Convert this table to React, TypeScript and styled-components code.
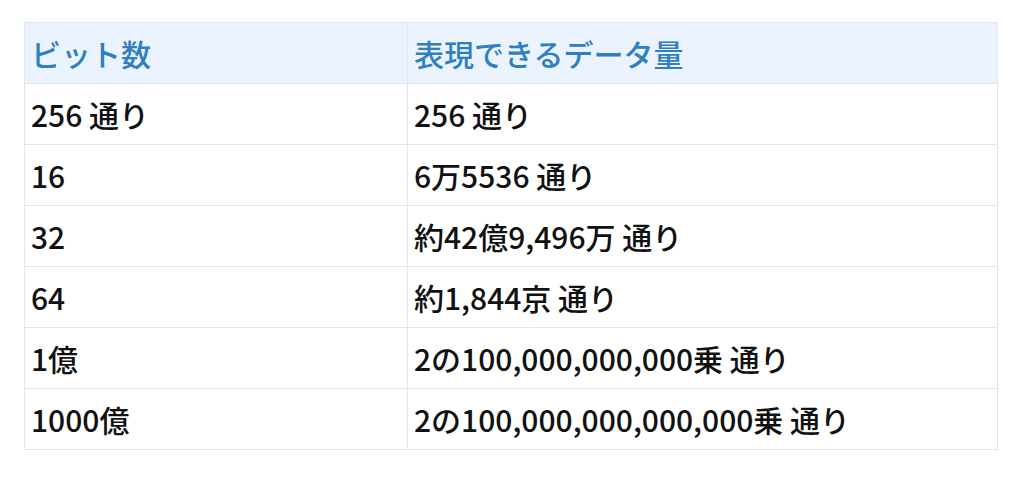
import React from "react";
import styled, { createGlobalStyle } from "styled-components";

const Global = createGlobalStyle`
  html, body { margin: 0; padding: 0; background: #ffffff; }
  body { font-family: "Noto Sans CJK JP", "Noto Sans", sans-serif; }
`;

const Page = styled.div`
  padding: 22px 26px 0 24px;
`;

const Table = styled.table`
  width: 974px;
  border-collapse: collapse;
  table-layout: fixed;
  font-family: "Noto Sans CJK JP", "Noto Sans", sans-serif;
  font-size: 30px;
  line-height: 1.2;
`;

const Th = styled.th<{ $w?: number }>`
  width: ${(p) => (p.$w ? `${p.$w}px` : "auto")};
  height: 61px;
  box-sizing: border-box;
  background: #eaf3fe;
  color: #2f7fc1;
  font-weight: 500;
  text-align: left;
  padding: 0 6px 0 6px;
  border: 1px solid #e3e6ea;
`;

const Td = styled.td`
  height: 61px;
  box-sizing: border-box;
  color: #111111;
  font-weight: 500;
  padding: 0 6px 0 6px;
  border: 1px solid #e6e6e6;
  white-space: nowrap;
`;

const rows: [string, string][] = [
  ["256 通り", "256 通り"],
  ["16", "6万5536 通り"],
  ["32", "約42億9,496万 通り"],
  ["64", "約1,844京 通り"],
  ["1億", "2の100,000,000,000乗 通り"],
  ["1000億", "2の100,000,000,000,000乗 通り"],
];

export default function App() {
  return (
    <>
      <Global />
      <Page>
        <Table>
          <thead>
            <tr>
              <Th $w={383}>ビット数</Th>
              <Th>表現できるデータ量</Th>
            </tr>
          </thead>
          <tbody>
            {rows.map(([a, b], i) => (
              <tr key={i}>
                <Td>{a}</Td>
                <Td>{b}</Td>
              </tr>
            ))}
          </tbody>
        </Table>
      </Page>
    </>
  );
}
